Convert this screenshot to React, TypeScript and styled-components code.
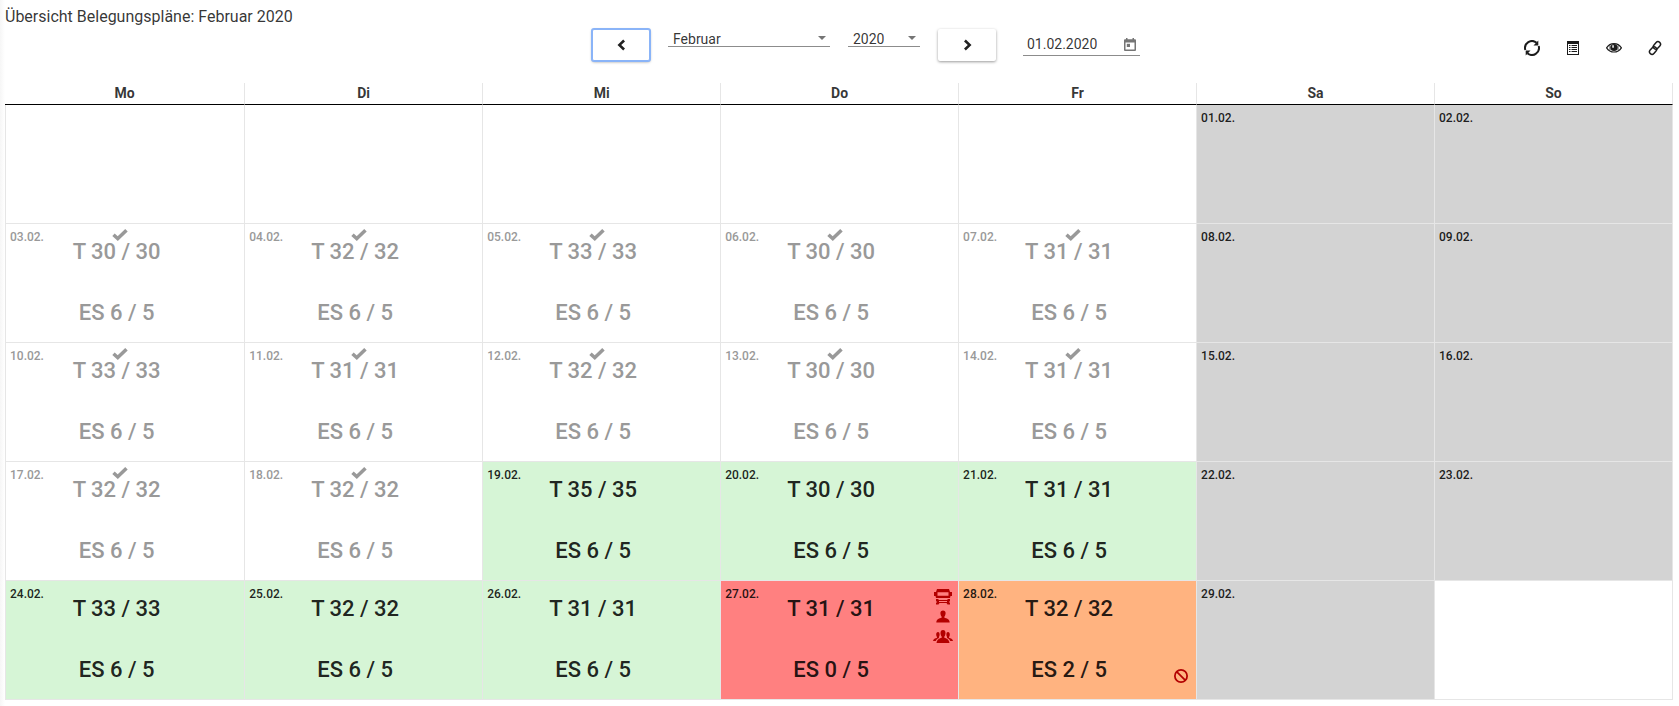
import React, { useState } from "react";
import styled, { createGlobalStyle, css } from "styled-components";

const GlobalStyle = createGlobalStyle`
  *, *::before, *::after { box-sizing: border-box; }
  body {
    margin: 0;
    background: #fff;
    color: rgba(0, 0, 0, 0.87);
    font-family: Roboto, "Liberation Sans", sans-serif;
    font-size: 14px;
  }
`;

type Tone = "plain" | "weekend" | "ok" | "error" | "warning";

const toneColors: Record<Tone, string> = {
  plain: "transparent",
  weekend: "#d3d3d3",
  ok: "#d6f5d6",
  error: "#ff8080",
  warning: "#ffb380",
};

const Page = styled.main`
  padding: 5px 6px 6px 5px;
  background: linear-gradient(to right, #f6f6f6, #fff 5px);
`;

const Title = styled.h1`
  margin: 0;
  font-size: 16px;
  line-height: 24px;
  font-weight: 400;
  color: rgba(0, 0, 0, 0.8);
`;

const Toolbar = styled.div`
  display: grid;
  grid-template-columns: 1fr auto 1fr;
  align-items: start;
  height: 54px;
`;

const Navigation = styled.div`
  grid-column: 2;
  display: flex;
  align-items: flex-start;
  gap: 18px;
  padding-left: 54px;
`;

const NavButton = styled.button<{ $active?: boolean }>`
  display: flex;
  align-items: center;
  justify-content: center;
  width: 58px;
  height: 32px;
  padding: 0;
  border: 0;
  border-radius: 2px;
  background: #fff;
  color: rgba(0, 0, 0, 0.87);
  box-shadow: ${(p) => (p.$active ? "0 0 0 1px #8ab4f8, " : "")}0 1px 3px rgba(0, 0, 0, 0.4);
  ${(p) => p.$active && css`border: 1px solid #8ab4f8;`}
`;

const SelectField = styled.label<{ $width: number }>`
  display: grid;
  align-items: center;
  width: ${(p) => p.$width}px;
  height: 18px;
  border-bottom: 1px solid #8c8c8c;

  > * { grid-area: 1 / 1; }
  > svg { justify-self: end; margin-right: 4px; color: #757575; pointer-events: none; }
`;

const Select = styled.select`
  appearance: none;
  width: 100%;
  height: 17px;
  padding: 2px 0 0 5px;
  border: 0;
  background: transparent;
  color: rgba(0, 0, 0, 0.8);
  font: 400 14px/16px Roboto, sans-serif;
`;

const DateField = styled.div`
  display: flex;
  align-items: center;
  width: 117px;
  height: 27px;
  margin-left: 9px;
  padding: 4px 4px 0;
  border-bottom: 1px solid #8c8c8c;
`;

const DateInput = styled.input`
  flex: 1;
  min-width: 0;
  padding: 0;
  border: 0;
  background: transparent;
  color: rgba(0, 0, 0, 0.8);
  font: 400 14px/18px Roboto, sans-serif;
`;

const IconButton = styled.button`
  display: flex;
  align-items: center;
  justify-content: center;
  padding: 0;
  border: 0;
  background: transparent;
  color: #1c1c1c;
`;

const Actions = styled.div`
  display: flex;
  justify-content: flex-end;
  gap: 25px;
  padding: 11px 10px 0 0;
`;

const Calendar = styled.table`
  width: 100%;
  table-layout: fixed;
  border-collapse: separate;
  border-spacing: 0;
`;

const DayHeader = styled.th`
  height: 22px;
  padding: 0 0 2px;
  border-right: 1px solid #e6e6e6;
  border-bottom: 1px solid #000;
  font-size: 14px;
  line-height: 18px;
  font-weight: 700;
  color: rgba(0, 0, 0, 0.8);
  &:first-child { width: 14.4%; }
`;

const DayCell = styled.td<{ $tone: Tone }>`
  height: 119px;
  padding: 0;
  vertical-align: top;
  border-right: 1px solid #e6e6e6;
  border-bottom: 1px solid #e6e6e6;
  background: ${(p) => toneColors[p.$tone]};
  &:first-child { border-left: 1px solid #e6e6e6; }
`;

const CellBody = styled.div<{ $faded: boolean }>`
  display: grid;
  height: 118px;
  color: ${(p) => (p.$faded ? "#999" : "rgba(0, 0, 0, 0.87)")};
  > * { grid-area: 1 / 1; }
`;

const DayDate = styled.time`
  padding: 5px 0 0 4px;
  font-size: 12px;
  line-height: 16px;
  font-weight: 500;
`;

const Counts = styled.div`
  display: flex;
  flex-direction: column;
  align-items: center;
  gap: 37px;
  padding: 16px 17px 0 0;
  font-size: 22px;
  line-height: 24px;
  font-weight: 500;
`;

const CheckMark = styled.div`
  display: flex;
  justify-content: center;
  padding: 3px 10px 0 0;
`;

const Issues = styled.div<{ $bottom?: boolean }>`
  display: flex;
  flex-direction: column;
  align-items: center;
  justify-self: end;
  align-self: ${(p) => (p.$bottom ? "end" : "start")};
  gap: 4px;
  padding: ${(p) => (p.$bottom ? "0 8px 16px 0" : "8px 5px 0 0")};
  color: #b30000;
`;

const Icon = ({ size = 16, children }: { size?: number; children: React.ReactNode }) => (
  <svg width={size} height={size} viewBox="0 0 16 16" fill="currentColor" aria-hidden="true">
    {children}
  </svg>
);

const CheckIcon = () => (
  <Icon><path d="M.3 8.900L2.700 6.500l3 2.800L13.200 2l2.500 2.600L5.800 14z" /></Icon>
);
const ChevronLeft = () => (
  <Icon><path d="M10.2 2.500l1.800 1.900L8.200 8l3.800 3.600-1.800 1.900L4.500 8z" /></Icon>
);
const ChevronRight = () => (
  <Icon><path d="M6.800 2.500L5 4.400 8.800 8 5 11.600l1.800 1.900L12.500 8z" /></Icon>
);
const ArrowDown = () => (
  <svg width="8" height="4" viewBox="0 0 8 4" fill="currentColor" aria-hidden="true"><path d="M0 0h8L4 4z" /></svg>
);
const CalendarIcon = () => (
  <svg width="12" height="13" viewBox="0 0 12 13" fill="#757575" aria-hidden="true">
    <path fillRule="evenodd" d="M2 0h1.500v1.300h5V0H10v1.300h.8c.7 0 1.200.5 1.200 1.200v9.200c0 .7-.5 1.300-1.200 1.300H1.200C.5 13 0 12.400 0 11.700V2.500c0-.7.5-1.200 1.200-1.200H2zM1.500 4.500v7h9v-7z" />
    <path d="M2.800 5.800h3.200V9H2.800z" />
  </svg>
);
const RefreshIcon = () => (
  <Icon>
    <g fill="none" stroke="currentColor" strokeWidth="2">
      <path d="M1.300 10A7 7 0 0 1 12.600 2.800M14.700 6A7 7 0 0 1 3.400 13.200" />
    </g>
    <path d="M14.300.6v5H9.500zM1.700 15.400v-5h4.800z" />
  </Icon>
);
const ListIcon = () => (
  <Icon>
    <path fillRule="evenodd" d="M2 1h12v14H2zM3 4v10h10V4z" />
    <path d="M4 5h1.500v1H4zm2.500 0H12v1H6.500zM4 7h1.500v1H4zm2.500 0H12v1H6.500zM4 9h1.500v1H4zm2.500 0H12v1H6.500zM4 11h1.500v1H4zm2.500 0H12v1H6.500z" />
  </Icon>
);
const EyeIcon = () => (
  <Icon>
    <path d="M.6 7.800C2.500 5 5 3.700 8 3.700s5.500 1.300 7.400 4.100C13.500 10.700 11 12 8 12S2.500 10.700.6 7.800z" fill="none" stroke="currentColor" strokeWidth="1.200" />
    <circle cx="8" cy="7.500" r="3.600" />
    <path d="M4 5.500v4.500M12 5.500v4.500" stroke="currentColor" strokeWidth=".8" />
    <path d="M6.300 5.200h1.500v2.600H6.300z" fill="#fff" />
  </Icon>
);
const LinkIcon = () => (
  <Icon>
    <g fill="none" stroke="currentColor" strokeWidth="1.500">
      <rect x="7.400" y="1.300" width="5" height="8.200" rx="2.500" transform="rotate(42 9.900 5.400)" />
      <rect x="3.600" y="6.500" width="5" height="8.200" rx="2.500" transform="rotate(42 6.100 10.600)" />
    </g>
  </Icon>
);
const BusIcon = () => (
  <svg width="20" height="16" viewBox="0 0 20 16" fill="currentColor" aria-hidden="true">
    <path fillRule="evenodd" d="M4 0h12l1 3h2v4h-1.500l-.5 2H3l-.5-2H1V3h2zM4.500 3.200v3.600h11V3.200z" />
    <path fillRule="evenodd" d="M3 10h2l1 1h8l1-1h2v2l-1 1 1 1v1.500h-2.500l-1-1.500h-7l-1 1.500H3V14l1-1-1-1zm3 2v1h8v-1z" />
  </svg>
);
const UserIcon = () => (
  <Icon><path d="M5.400 4C5.400 2.400 6.300 1.500 8 1.500s2.600.9 2.600 2.500c0 1.600-.5 2.800-1.200 3.500v1.300c2.200.6 5 1.100 5.300 4.700H1.300c.3-3.600 3.100-4.100 5.300-4.700V7.500C5.900 6.800 5.400 5.600 5.400 4z" /></Icon>
);
const GroupIcon = () => (
  <svg width="20" height="16" viewBox="0 0 20 16" fill="currentColor" aria-hidden="true">
    <path d="M7.500 4C7.500 2 8.300 1 10 1s2.500 1 2.500 3c0 1.600-.5 2.800-1.200 3.500v1.200c2.200.7 4.700 1.300 5.200 5.300h-13c.5-4 3-4.600 5.200-5.300V7.500C8 6.800 7.500 5.600 7.500 4z" />
    <path d="M3.200 5.500C3.200 4 3.800 3 5 3c1 0 1.600.8 1.600 2.500 0 1.200-.3 1.900-.7 2.400L6 9 4 10l-1.300 2H0c.3-2.300 2.200-2.500 4-3.300V8c-.5-.5-.8-1.300-.8-2.500zM16.800 5.500C16.800 4 16.200 3 15 3c-1 0-1.600.8-1.600 2.500 0 1.200.3 1.900.7 2.400L14 9l2 1 1.300 2H20c-.3-2.300-2.200-2.500-4-3.300V8c.5-.5.8-1.300.8-2.500z" />
  </svg>
);
const BanIcon = () => (
  <Icon size={14}>
    <g fill="none" stroke="currentColor" strokeWidth="2"><circle cx="8" cy="8" r="7" /><path d="M3 3l10 10" /></g>
  </Icon>
);

interface Day {
  date: string;
  tone: Tone;
  t?: string;
  es?: string;
  done?: boolean;
  issue?: "staff" | "blocked";
}

const weekend = (date: string): Day => ({ date, tone: "weekend" });
const done = (date: string, t: string): Day => ({ date, tone: "plain", t, es: "6 / 5", done: true });
const open = (date: string, t: string): Day => ({ date, tone: "ok", t, es: "6 / 5" });

const weeks: (Day | null)[][] = [
  [null, null, null, null, null, weekend("01.02."), weekend("02.02.")],
  [done("03.02.", "30 / 30"), done("04.02.", "32 / 32"), done("05.02.", "33 / 33"), done("06.02.", "30 / 30"), done("07.02.", "31 / 31"), weekend("08.02."), weekend("09.02.")],
  [done("10.02.", "33 / 33"), done("11.02.", "31 / 31"), done("12.02.", "32 / 32"), done("13.02.", "30 / 30"), done("14.02.", "31 / 31"), weekend("15.02."), weekend("16.02.")],
  [done("17.02.", "32 / 32"), done("18.02.", "32 / 32"), open("19.02.", "35 / 35"), open("20.02.", "30 / 30"), open("21.02.", "31 / 31"), weekend("22.02."), weekend("23.02.")],
  [
    open("24.02.", "33 / 33"), open("25.02.", "32 / 32"), open("26.02.", "31 / 31"),
    { date: "27.02.", tone: "error", t: "31 / 31", es: "0 / 5", issue: "staff" },
    { date: "28.02.", tone: "warning", t: "32 / 32", es: "2 / 5", issue: "blocked" },
    weekend("29.02."), null,
  ],
];

const months = ["Januar", "Februar", "März", "April", "Mai", "Juni", "Juli", "August", "September", "Oktober", "November", "Dezember"];

const CalendarDay = ({ day }: { day: Day | null }) => (
  <DayCell $tone={day ? day.tone : "plain"}>
    {day && (
      <CellBody $faded={!!day.done}>
        <DayDate>{day.date}</DayDate>
        {day.t && (
          <Counts>
            <span>T {day.t}</span>
            <span>ES {day.es}</span>
          </Counts>
        )}
        {day.done && <CheckMark><CheckIcon /></CheckMark>}
        {day.issue === "staff" && <Issues><BusIcon /><UserIcon /><GroupIcon /></Issues>}
        {day.issue === "blocked" && <Issues $bottom><BanIcon /></Issues>}
      </CellBody>
    )}
  </DayCell>
);

export default function App() {
  const [month, setMonth] = useState("Februar");
  const [year, setYear] = useState("2020");
  const [date, setDate] = useState("01.02.2020");

  return (
    <>
      <GlobalStyle />
      <Page>
        <Title>Übersicht Belegungspläne: Februar 2020</Title>
        <Toolbar>
          <Navigation>
            <NavButton $active type="button" aria-label="Vorheriger Monat"><ChevronLeft /></NavButton>
            <SelectField $width={162}>
              <Select aria-label="Monat" value={month} onChange={(e) => setMonth(e.target.value)}>
                {months.map((m) => <option key={m}>{m}</option>)}
              </Select>
              <ArrowDown />
            </SelectField>
            <SelectField $width={72}>
              <Select aria-label="Jahr" value={year} onChange={(e) => setYear(e.target.value)}>
                {["2019", "2020", "2021"].map((y) => <option key={y}>{y}</option>)}
              </Select>
              <ArrowDown />
            </SelectField>
            <NavButton type="button" aria-label="Nächster Monat"><ChevronRight /></NavButton>
            <DateField>
              <DateInput aria-label="Datum" value={date} onChange={(e) => setDate(e.target.value)} />
              <IconButton type="button" aria-label="Kalender öffnen"><CalendarIcon /></IconButton>
            </DateField>
          </Navigation>
          <Actions>
            <IconButton type="button" aria-label="Aktualisieren"><RefreshIcon /></IconButton>
            <IconButton type="button" aria-label="Liste"><ListIcon /></IconButton>
            <IconButton type="button" aria-label="Ansicht"><EyeIcon /></IconButton>
            <IconButton type="button" aria-label="Link"><LinkIcon /></IconButton>
          </Actions>
        </Toolbar>
        <Calendar>
          <thead>
            <tr>{["Mo", "Di", "Mi", "Do", "Fr", "Sa", "So"].map((d) => <DayHeader key={d} scope="col">{d}</DayHeader>)}</tr>
          </thead>
          <tbody>
            {weeks.map((week, w) => (
              <tr key={w}>{week.map((day, d) => <CalendarDay key={d} day={day} />)}</tr>
            ))}
          </tbody>
        </Calendar>
      </Page>
    </>
  );
}
